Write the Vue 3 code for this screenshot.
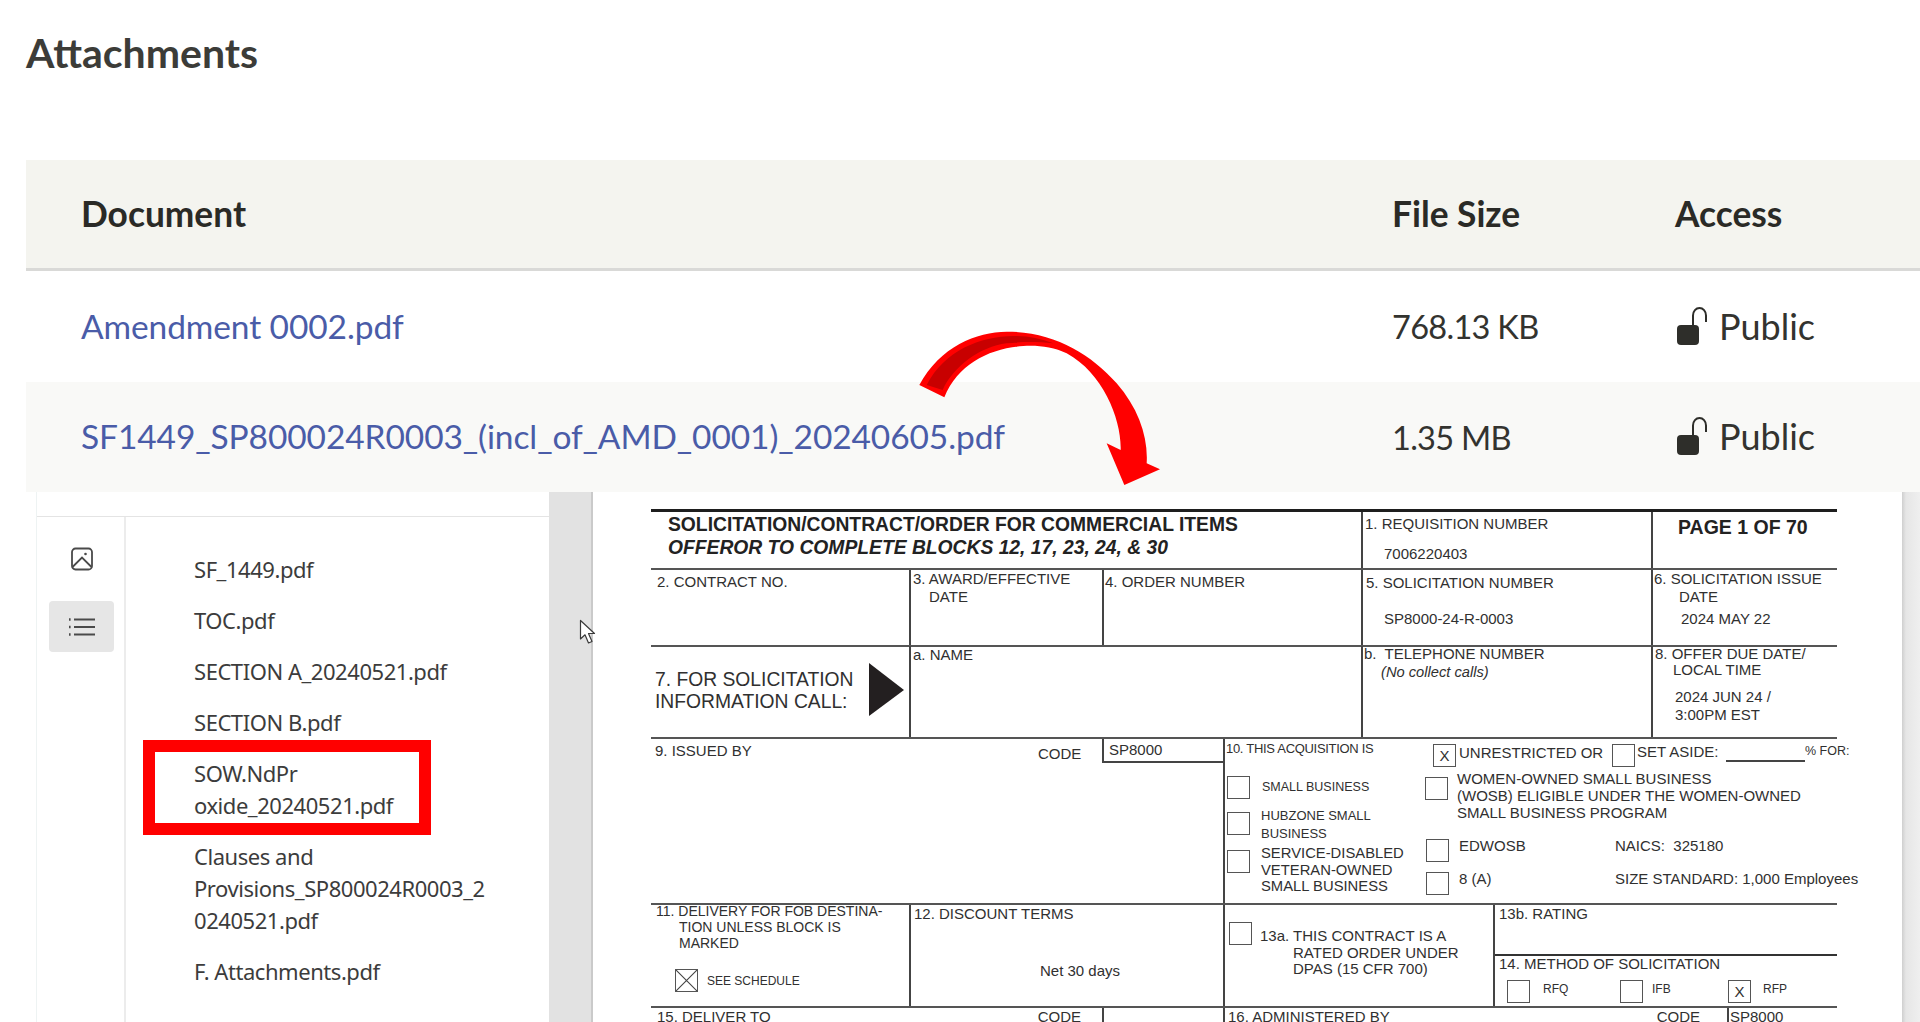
<template>
  <div class="screen">
    <h1 class="title">Attachments</h1>

    <section class="table">
      <div class="row head">
        <div>Document</div>
        <div>File Size</div>
        <div>Access</div>
      </div>
      <div v-for="doc in docs" :key="doc.name" class="row body">
        <a class="link">{{ doc.name }}</a>
        <div class="size">{{ doc.size }}</div>
        <div class="access">
          <svg class="lock" viewBox="0 0 31 38" width="31" height="38">
            <rect x="1" y="18" width="22" height="20" rx="4" fill="#2e2e2a" />
            <path d="M17 19V8.500C17 4 20 1 23.500 1s6.500 3 6.500 7.500V15" fill="none" stroke="#2e2e2a" stroke-width="2" />
          </svg>
          <span class="public">Public</span>
        </div>
      </div>
    </section>

    <section class="viewer">
      <aside class="panel">
        <div class="panel-top"></div>
        <div class="panel-body">
          <nav class="rail">
            <button class="rail-btn">
              <svg viewBox="0 0 24 24" width="24" height="24" fill="none" stroke="#4a4a4a" stroke-width="1.8">
                <rect x="2" y="1.500" width="20" height="21" rx="3.500" />
                <path d="M2.500 20 L12 10.500 L21.500 20" />
                <circle cx="15.500" cy="7" r="1.300" fill="#4a4a4a" stroke="none" />
              </svg>
            </button>
            <button class="rail-btn active">
              <svg viewBox="0 0 28 20" width="28" height="20" fill="none" stroke="#4a4a4a" stroke-width="1.800">
                <path d="M6 2.500H27M6 10H27M6 17.500H27" />
                <path d="M1 2.500H2.600M1 10H2.600M1 17.500H2.600" stroke-width="2.600" />
              </svg>
            </button>
          </nav>
          <ul class="files">
            <li v-for="file in files" :key="file[0]">
              <div v-for="line in file" :key="line">{{ line }}</div>
            </li>
          </ul>
        </div>
        <div class="highlight"></div>
      </aside>

      <div class="gutter left-gutter">
        <svg class="cursor" viewBox="0 0 17 26" width="17" height="26">
          <path d="M1.500 1.500V20L6 15.800L9.500 24L13 22.500L9.500 14.500H15.500Z" fill="#fff" stroke="#3a3a3a" stroke-width="1.200" stroke-linejoin="round" />
        </svg>
      </div>

      <main class="page">
        <div class="form">
          <!-- Row 1 -->
          <div class="fr ra">
            <div class="cell title-cell">
              <div class="form-title">SOLICITATION/CONTRACT/ORDER FOR COMMERCIAL ITEMS</div>
              <div class="form-title ital">OFFEROR TO COMPLETE BLOCKS 12, 17, 23, 24, &amp; 30</div>
            </div>
            <div class="cell req">
              <div>1. REQUISITION NUMBER</div>
              <div class="req-val">7006220403</div>
            </div>
            <div class="cell page-no">PAGE 1 OF 70</div>
          </div>

          <!-- Row 2 -->
          <div class="fr rb">
            <div class="cell c-contract">2. CONTRACT NO.</div>
            <div class="cell c-award">
              <div>3. AWARD/EFFECTIVE</div>
              <div class="i16">DATE</div>
            </div>
            <div class="cell c-order">4. ORDER NUMBER</div>
            <div class="cell c-sol">
              <div>5. SOLICITATION NUMBER</div>
              <div class="sol-val">SP8000-24-R-0003</div>
            </div>
            <div class="cell c-issue">
              <div>6. SOLICITATION ISSUE</div>
              <div class="i25">DATE</div>
              <div class="issue-val">2024 MAY 22</div>
            </div>
          </div>

          <!-- Row 3 -->
          <div class="fr rc">
            <div class="cell c-info">
              <div class="info-text">7. FOR SOLICITATION<br />INFORMATION CALL:</div>
              <svg class="tri" viewBox="0 0 35 53" width="35" height="53"><polygon points="0,0 35,27 0,53" fill="#231f20" /></svg>
            </div>
            <div class="cell c-name">a. NAME</div>
            <div class="cell c-tel">
              <div>b.&nbsp; TELEPHONE NUMBER</div>
              <div class="nocollect">(No collect calls)</div>
            </div>
            <div class="cell c-due">
              <div>8. OFFER DUE DATE/</div>
              <div class="i18">LOCAL TIME</div>
              <div class="due-val">2024 JUN 24 /<br />3:00PM EST</div>
            </div>
          </div>

          <!-- Row 4 -->
          <div class="fr rd">
            <div class="cell c-issued">
              <div class="issued">9. ISSUED BY</div>
              <div class="code">CODE</div>
              <div class="code-box">SP8000</div>
            </div>
            <div class="cell c-acq">
              <div class="acq-top">
                <span class="acq-label">10. THIS ACQUISITION IS</span>
                <span class="cb x">X</span>
                <span class="unres">UNRESTRICTED OR</span>
                <span class="cb"></span>
                <span class="aside">SET ASIDE:</span>
                <span class="blank"></span>
                <span class="pct">% FOR:</span>
              </div>
              <div class="acq-cols">
                <div class="acq-left">
                  <div class="opt o1"><span class="cb"></span><span class="sb">SMALL BUSINESS</span></div>
                  <div class="opt o2"><span class="cb"></span><span class="hub">HUBZONE SMALL<br />BUSINESS</span></div>
                  <div class="opt o3"><span class="cb"></span><span class="svc">SERVICE-DISABLED<br />VETERAN-OWNED<br />SMALL BUSINESS</span></div>
                </div>
                <div class="acq-right">
                  <div class="opt wosb"><span class="cb"></span><span>WOMEN-OWNED SMALL BUSINESS<br />(WOSB) ELIGIBLE UNDER THE WOMEN-OWNED<br />SMALL BUSINESS PROGRAM</span></div>
                  <div class="cert c1"><span class="cb"></span><span>EDWOSB</span><span>NAICS:&nbsp; 325180</span></div>
                  <div class="cert c2"><span class="cb"></span><span>8 (A)</span><span>SIZE STANDARD: 1,000 Employees</span></div>
                </div>
              </div>
            </div>
          </div>

          <!-- Row 5 -->
          <div class="fr re">
            <div class="cell c-fob">
              <div class="fob">11. DELIVERY FOR FOB DESTINA-</div>
              <div class="fob i23">TION UNLESS BLOCK IS</div>
              <div class="fob i23">MARKED</div>
              <div class="sched"><span class="cb cross"><svg viewBox="0 0 23 23" width="21" height="21"><path d="M0 0L23 23M23 0L0 23" stroke="#444" stroke-width="1.200" /></svg></span><span>SEE SCHEDULE</span></div>
            </div>
            <div class="cell c-disc">
              <div>12. DISCOUNT TERMS</div>
              <div class="net">Net 30 days</div>
            </div>
            <div class="cell c-rated">
              <span class="cb"></span>
              <div class="rated-text">
                <div>13a. THIS CONTRACT IS A</div>
                <div class="i33">RATED ORDER UNDER</div>
                <div class="i33">DPAS (15 CFR 700)</div>
              </div>
            </div>
            <div class="cell c-right">
              <div class="rating">13b. RATING</div>
              <div class="method">
                <div>14. METHOD OF SOLICITATION</div>
                <div class="method-opts">
                  <span class="cb"></span><span class="mo m1">RFQ</span>
                  <span class="cb"></span><span class="mo m2">IFB</span>
                  <span class="cb x">X</span><span class="mo m3">RFP</span>
                </div>
              </div>
            </div>
          </div>

          <!-- Row 6 -->
          <div class="fr rf">
            <div class="cell c-deliver"><span>15. DELIVER TO</span><span>CODE</span></div>
            <div class="cell"></div>
            <div class="cell c-admin"><span>16. ADMINISTERED BY</span><span>CODE</span></div>
            <div class="cell c-code2">SP8000</div>
          </div>
        </div>
      </main>

      <div class="gutter right-gutter"></div>
    </section>

    <svg class="arrow" viewBox="0 0 900 570" width="300" height="190">
      <path d="M88 225C150 110 260 65 350 65C490 65 600 130 680 220C745 295 775 380 770 460L810 478L703 525L650 400L692 420C695 330 640 190 530 130C490 110 440 105 400 108C300 115 205 160 163 262Z" fill="#ff0000" />
      <path d="M110 225C165 120 270 80 370 78C410 76 450 85 490 100C440 95 400 95 350 100C270 110 190 170 158 240Z" fill="#c80000" />
    </svg>
  </div>
</template>

<script setup>
const docs = [
  { name: 'Amendment 0002.pdf', size: '768.13 KB' },
  { name: 'SF1449_SP800024R0003_(incl_of_AMD_0001)_20240605.pdf', size: '1.35 MB' },
]
const files = [
  ['SF_1449.pdf'],
  ['TOC.pdf'],
  ['SECTION A_20240521.pdf'],
  ['SECTION B.pdf'],
  ['SOW.NdPr', 'oxide_20240521.pdf'],
  ['Clauses and', 'Provisions_SP800024R0003_2', '0240521.pdf'],
  ['F. Attachments.pdf'],
]
</script>

<style>
html, body { margin: 0; background: #fff; }
</style>

<style scoped>
.screen {
  position: relative;
  width: 1920px;
  height: 1022px;
  overflow: hidden;
  background: #fff;
  font-family: "Lato", "Noto Sans", sans-serif;
  color: #33332f;
}
.title {
  margin: 0;
  height: 160px;
  box-sizing: border-box;
  padding: 29px 0 0 26px;
  font-size: 41px;
  line-height: 48px;
  font-weight: 700;
  color: #3c3c38;
}
.table { margin-left: 26px; }
.row {
  display: grid;
  grid-template-columns: 1311px 283px 1fr;
  padding-left: 55px;
  padding-bottom: 2px;
  align-items: center;
  box-sizing: border-box;
}
.head {
  height: 111px;
  background: #f4f4ef;
  border-bottom: 3px solid #d9d9d7;
  font-size: 35.300px;
  font-weight: 700;
  color: #2a2a26;
}
.body {
  height: 111px;
  font-size: 33.500px;
}
.body:nth-of-type(3) { height: 110px; background: #f9f9f7; }
.link { color: #4a5ca8; letter-spacing: -0.100px; }
.size { font-size: 32.500px; letter-spacing: -0.700px; padding-top: 2px; }
.access { display: flex; align-items: center; gap: 12px; }
.lock { margin-left: 1px; }
.public { font-size: 36px; }

.viewer {
  display: flex;
  height: 530px;
  margin-left: 36px;
}
.panel {
  position: relative;
  width: 513px;
  box-sizing: border-box;
  border-left: 1px solid #eef3f3;
  display: flex;
  flex-direction: column;
}
.panel-top { height: 24px; flex: none; border-bottom: 1px solid #e4e4e4; }
.panel-body { display: flex; flex: 1; }
.rail {
  width: 89px;
  flex: none;
  box-sizing: border-box;
  border-right: 2px solid #ececec;
  padding: 26px 0 0 12px;
  display: flex;
  flex-direction: column;
  gap: 26px;
}
.rail-btn {
  width: 65px;
  height: 51px;
  border: 0;
  padding: 0;
  background: none;
  border-radius: 4px;
  display: flex;
  align-items: center;
  justify-content: center;
}
.rail-btn:first-child { height: 32px; }
.rail-btn.active { background: #e6e6e6; }
.files {
  list-style: none;
  margin: 0;
  padding: 36px 0 0 68px;
  font-family: "Noto Sans", sans-serif;
  font-size: 22px;
  line-height: 32px;
  letter-spacing: -0.450px;
  color: #3c3c3c;
  white-space: nowrap;
}
.files li { margin-bottom: 19px; }
.highlight {
  position: absolute;
  left: 106px;
  top: 248px;
  width: 264px;
  height: 71px;
  border-style: solid;
  border-color: #ff0000;
  border-width: 12px;
}
.gutter {
  position: relative;
  background: #e2e2e2;
  flex: none;
}
.left-gutter {
  width: 44px;
  border-right: 2px solid #cacaca;
  box-sizing: border-box;
}
.right-gutter {
  width: 18px;
  background: linear-gradient(90deg, #cfcfcf 0, #e6e6e6 4px, #efefef 100%);
}
.cursor { position: absolute; left: 30px; top: 127px; }
.page {
  flex: 1;
  min-width: 0;
  padding: 17px 0 0 58px;
  background: #fff;
}

/* the scanned form */
.form {
  width: 1186px;
  font-family: "Liberation Sans", Arial, sans-serif;
  font-size: 15px;
  line-height: 17px;
  color: #303030;
  white-space: nowrap;
}
.fr {
  display: grid;
  box-sizing: border-box;
  border-top: 2px solid #555;
}
.cell { min-width: 0; box-sizing: border-box; }
.cell + .cell { border-left: 2px solid #444; }
.i16 { padding-left: 16px; }
.i18 { padding-left: 18px; }
.i23 { padding-left: 23px; }
.i25 { padding-left: 25px; }
.i33 { padding-left: 33px; }
.cb {
  display: inline-flex;
  align-items: center;
  justify-content: center;
  flex: none;
  width: 23px;
  height: 23px;
  box-sizing: border-box;
  border: 1.500px solid #555;
  font-size: 15px;
  line-height: 1;
}

.ra {
  height: 59px;
  border-top: 3px solid #1e1e1e;
  grid-template-columns: 710px 290px 186px;
}
.title-cell { padding: 1px 0 0 17px; }
.form-title { font-size: 19.300px; font-weight: 700; line-height: 23px; color: #222; }
.ital { font-style: italic; }
.req { padding: 3px 0 0 2px; }
.req-val { margin: 13px 0 0 19px; }
.page-no { padding: 4px 0 0 25px; font-size: 19.500px; font-weight: 700; line-height: 22px; color: #222; }

.rb {
  height: 77px;
  grid-template-columns: 258px 193px 259px 290px 186px;
}
.c-contract { padding: 3px 0 0 6px; }
.c-award { padding-left: 2px; line-height: 18px; }
.c-order { padding: 3px 0 0 1px; }
.c-sol { padding: 4px 0 0 3px; }
.sol-val { margin: 19px 0 0 18px; }
.c-issue { padding-left: 1px; line-height: 18px; }
.issue-val { margin: 4px 0 0 27px; }

.rc {
  height: 92px;
  grid-template-columns: 258px 452px 290px 186px;
}
.c-info {
  display: flex;
  align-items: center;
  padding: 0 5px 6px 4px;
  justify-content: space-between;
}
.info-text { font-size: 19.300px; line-height: 22px; margin-top: 4px; }
.c-name { padding-left: 2px; margin-top: -1px; }
.c-tel { padding-left: 1px; line-height: 16px; margin-top: -1px; }
.nocollect { margin: 2px 0 0 17px; font-style: italic; font-size: 14.700px; }
.c-due { padding-left: 2px; line-height: 16px; margin-top: -1px; }
.due-val { margin: 10px 0 0 20px; line-height: 18px; }

.rd {
  height: 166px;
  grid-template-columns: 572px 614px;
}
.c-issued {
  display: grid;
  grid-template-columns: 387px 64px 121px;
  align-items: start;
}
.issued { padding: 3px 0 0 4px; }
.code { padding-top: 6px; }
.code-box {
  height: 24px;
  box-sizing: border-box;
  border-left: 2px solid #444;
  border-bottom: 2px solid #444;
  padding: 2px 0 0 5px;
}
.acq-top {
  display: flex;
  align-items: flex-start;
  height: 31px;
  padding-left: 1px;
}
.acq-top > * { flex: none; }
.acq-label { width: 207px; font-size: 13px; letter-spacing: -0.300px; padding-top: 1px; }
.acq-top .cb { margin-top: 5px; }
.unres { width: 153px; margin-left: 3px; padding-top: 5px; }
.aside { width: 89px; margin-left: 2px; padding-top: 4px; }
.blank { width: 79px; height: 21px; border-bottom: 2px solid #444; }
.pct { font-size: 12.500px; padding-top: 4px; }
.acq-cols { display: grid; grid-template-columns: 200px 1fr; }
.acq-left { padding-left: 2px; }
.opt { display: flex; align-items: flex-start; }
.o1 { margin-top: 6px; gap: 12px; align-items: center; }
.sb { font-size: 12.500px; }
.o2 { margin-top: 8px; gap: 11px; }
.o2 .cb, .o3 .cb { margin-top: 5px; }
.hub { font-size: 13px; line-height: 18px; }
.o3 { margin-top: 2px; gap: 11px; }
.svc { font-size: 14.800px; line-height: 16.500px; }
.wosb { gap: 9px; }
.wosb .cb { margin-top: 7px; }
.cert {
  display: grid;
  grid-template-columns: 33px 156px 1fr;
  padding-left: 1px;
}
.c1 { margin-top: 16px; height: 25px; }
.c2 { margin-top: 8px; }
.cert .cb { margin-top: 2px; }

.re {
  height: 103px;
  grid-template-columns: 258px 314px 270px 344px;
}
.c-fob { padding-left: 5px; margin-top: -2px; }
.fob { font-size: 14px; line-height: 16px; }
.sched {
  display: flex;
  align-items: center;
  gap: 9px;
  margin: 18px 0 0 19px;
  font-size: 12px;
}
.sched > span:last-child { padding-top: 2px; }
.c-disc { padding: 0 0 0 3px; }
.net { margin: 40px 0 0 126px; }
.c-rated { display: flex; padding: 17px 0 0 4px; gap: 8px; align-items: flex-start; }
.rated-text { padding-top: 6px; line-height: 16.500px; }
.c-right { display: flex; flex-direction: column; }
.rating { height: 49px; padding-left: 4px; }
.method { flex: 1; border-top: 2px solid #333; padding-left: 4px; line-height: 15px; }
.method-opts { display: flex; align-items: flex-start; margin: 9px 0 0 8px; font-size: 12px; }
.mo { padding-top: 2px; }
.m1 { margin: 0 52px 0 13px; width: 25px; }
.m2 { margin: 0 57px 0 9px; width: 19px; }
.m3 { margin-left: 12px; }

.rf { grid-template-columns: 451px 121px 504px 110px; height: 20px; }
.c-deliver { display: flex; justify-content: space-between; padding: 0 21px 0 6px; }
.c-admin { display: flex; justify-content: space-between; padding: 0 27px 0 3px; }
.c-code2 { padding: 0 0 0 1px; }

.arrow { position: absolute; left: 890px; top: 310px; }
</style>
